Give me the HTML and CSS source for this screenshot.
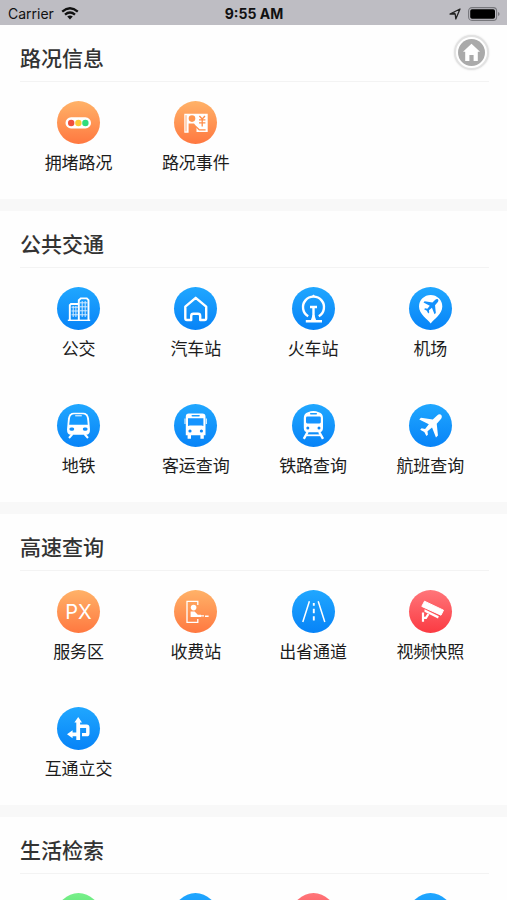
FILE: index.html
```html
<!DOCTYPE html>
<html lang="zh-CN">
<head>
<meta charset="utf-8">
<meta name="viewport" content="width=device-width, initial-scale=1">
<title>路况信息</title>
<link rel="stylesheet" href="styles.css">
</head>
<body>
<header class="status">
  <div class="status-left">
    <span>Carrier</span>
    <svg width="18" height="13" viewBox="0 0 18 13" aria-hidden="true">
      <g fill="none" stroke="#111" stroke-width="2.3">
        <path d="M1.2 4.6Q9-2 16.8 4.6"/>
        <path d="M4 7.7Q9 3.4 14 7.7"/>
      </g>
      <path d="M9 12.4L6.2 9.6Q9 7.4 11.8 9.6Z" fill="#111"/>
    </svg>
  </div>
  <span class="time">9:55 AM</span>
  <div class="status-right">
    <svg width="12" height="12" viewBox="0 0 12 12" aria-hidden="true"><path d="M1 6L11 1L6.8 11L6.2 6Z" fill="none" stroke="#222" stroke-width="1.3" stroke-linejoin="round"/><path d="M1 6L6 4.5L6.2 6Z" fill="#222"/></svg>
    <svg width="32" height="14" viewBox="0 0 32 14" aria-hidden="true">
      <rect x=".6" y=".6" width="28" height="12.8" rx="3.4" fill="none" stroke="#77777c" stroke-width="1.1"/>
      <rect x="2.2" y="2.2" width="24.8" height="9.6" rx="1.8" fill="#000"/>
      <path d="M30 5Q31.6 5.6 31.6 7T30 9Z" fill="#77777c"/>
    </svg>
  </div>
</header>

<a class="home" href="#" aria-label="首页">
  <svg width="27" height="27" viewBox="0 0 27 27"><circle cx="13.5" cy="13.5" r="13.5" fill="#aaa"/><path d="M13.5 4.8L22 12.8H19.8V22H15.6V16H11.4V22H7.2V12.8H5Z" fill="#fff"/></svg>
</a>

<main>
  <section class="group">
    <h2>路况信息</h2>
    <nav class="grid">
      <a class="tile" href="#"><span class="disc orange"><svg viewBox="0 0 43 43">
        <rect x="8.5" y="16.3" width="25.5" height="11.2" rx="5.6" fill="#fff"/>
        <circle cx="14.2" cy="22" r="3.2" fill="#f0503c"/><circle cx="21.4" cy="22" r="3.2" fill="#fccb35"/><circle cx="28.4" cy="22" r="3.2" fill="#2fdc7c"/>
      </svg></span><span>拥堵路况</span></a>
      <a class="tile" href="#"><span class="disc orange"><svg viewBox="0 0 43 43">
        <path d="M10.3 12.7H33.7V31H22.5V25.5L20 22.6H14.6V31.7H10.3Z" fill="#fff"/>
        <path d="M12 14.2V30.4" fill="none" stroke="#ff9650" stroke-width=".8"/>
        <circle cx="18" cy="17.6" r="3.3" fill="#ff9650"/>
        <path d="M25.4 15L28.2 18L31 15M28.2 18V25.4M25 18.8H31.4M25 21.8H31.4M22 25.6L25.2 28.8H31.6" fill="none" stroke="#ff8e4a" stroke-width="1.3"/>
      </svg></span><span>路况事件</span></a>
    </nav>
  </section>

  <section class="group">
    <h2>公共交通</h2>
    <nav class="grid">
      <a class="tile" href="#"><span class="disc blue"><svg viewBox="0 0 43 43">
        <path d="M10.8 33.3H33.2" stroke="#fff" stroke-width="1.4"/>
        <path d="M12.8 33V18.2L14 17H21.5M21.8 33V13.2L23.8 11.4H29.8L31.5 13.2V33" fill="none" stroke="#fff" stroke-width="1.9"/>
        <path d="M14.5 20.2H21M14.5 24H21M14.5 27.8H21M16.2 19V30M18.9 19V30M23 15.8H30.5M23 19.8H30.5M23 23.8H30.5M23 27.8H30.5M25.2 14V30M28.2 14V30" stroke="#d4ebff" stroke-width="1"/>
      </svg></span><span>公交</span></a>
      <a class="tile" href="#"><span class="disc blue"><svg viewBox="0 0 43 43">
        <path d="M21.7 10.8L32.2 19.7V31.3Q32.2 33 30.5 33H26.2V29Q26.2 26.8 24 26.8H19.4Q17.2 26.8 17.2 29V33H13Q11.3 33 11.3 31.3V19.7Z" fill="none" stroke="#fff" stroke-width="2.4" stroke-linejoin="round"/>
      </svg></span><span>汽车站</span></a>
      <a class="tile" href="#"><span class="disc blue"><svg viewBox="0 0 43 43">
        <path d="M16.2 29.2A10.5 10.5 0 1 1 26.8 29.2" fill="none" stroke="#fff" stroke-width="2.4"/>
        <path d="M19.2 9.8L21.5 7.4L23.8 9.8Z" fill="#fff"/>
        <path d="M18 20H25M21.5 20V34M13.8 34.2H30" stroke="#fff" stroke-width="2.4"/>
        <path d="M18.6 34L20.6 28H22.4L24.4 34Z" fill="#fff"/>
      </svg></span><span>火车站</span></a>
      <a class="tile" href="#"><span class="disc blue"><svg viewBox="0 0 43 43">
        <path d="M21.7 36.5C18.5 32.5 10 27 10 19.6A11.6 11.6 0 0 1 33.3 19.6C33.3 27 25 32.5 21.7 36.5Z" fill="#fff"/>
        <g class="cut" transform="translate(14 11.5) scale(.62)"><path d="M24.2 1.6C23.2.4 21.4.6 19.8 2L15.2 6.5L2.6 4.5L.8 6.5L11 11.5L7 16.4L3.3 15.8L1.8 17.4L6.2 19.8L8.4 24L10 22.6L9.6 19L14.4 14.8L18.6 25.4L20.7 23.5L19.4 10.9L23.6 6.2C25 4.6 25.2 2.8 24.2 1.6Z"/></g>
      </svg></span><span>机场</span></a>

      <a class="tile" href="#"><span class="disc blue"><svg viewBox="0 0 43 43">
        <path d="M16.8 8.8H26.2Q31 8.8 32 14.5L33 25.5Q33 30.8 29 30.8H14Q10 30.8 10 25.5L11 14.5Q12 8.8 16.8 8.8Z" fill="#fff"/>
        <path d="M17.2 10.3H25.8Q29.2 10.3 30 14L30.8 20.8H12.2L13 14Q13.8 10.3 17.2 10.3Z" fill="#159aff"/>
        <path d="M18.2 11.8H24.8" stroke="#fff" stroke-width="1"/>
        <rect x="12.4" y="23.5" width="4.8" height="3.2" rx="1.6" fill="#1090ff"/><rect x="25.8" y="23.5" width="4.8" height="3.2" rx="1.6" fill="#1090ff"/>
        <path d="M15.5 30L12 34M27.5 30L31 34" stroke="#fff" stroke-width="2"/>
      </svg></span><span>地铁</span></a>
      <a class="tile" href="#"><span class="disc blue"><svg viewBox="0 0 43 43">
        <path d="M14.8 9.5H28.4Q31.5 9.5 31.5 12.5V31.2H29.8V34.8H26.4V31.2H17V34.8H13.6V31.2H11.8V12.5Q11.8 9.5 14.8 9.5Z" fill="#fff"/>
        <rect x="17.5" y="11" width="8.3" height="1.6" rx=".8" fill="#1b9dff"/>
        <path d="M14 14.3H29.4V22L27.6 21.4H15.8L14 22Z" fill="#1594ff"/>
        <circle cx="16" cy="27" r="1.6" fill="#0c88fa"/><circle cx="27.4" cy="27" r="1.6" fill="#0c88fa"/>
        <path d="M11 14.5V20M32.3 14.5V20" stroke="#fff" stroke-width="1"/>
      </svg></span><span>客运查询</span></a>
      <a class="tile" href="#"><span class="disc blue"><svg viewBox="0 0 43 43">
        <path d="M16 8.2Q21.4 5.6 26.8 8.2Q31 9.5 31 14V24Q31 28.2 27 28.2H15.8Q11.8 28.2 11.8 24V14Q11.8 9.5 16 8.2Z" fill="#fff"/>
        <rect x="18" y="8.9" width="7" height="1.5" rx=".7" fill="#179aff"/>
        <rect x="14" y="12.6" width="14.8" height="6.8" rx="1.3" fill="#1594ff"/>
        <circle cx="15.8" cy="24" r="1.5" fill="#0c88fa"/><circle cx="27" cy="24" r="1.5" fill="#0c88fa"/>
        <path d="M15.6 28L11.8 34.8M27.2 28L31 34.8" stroke="#fff" stroke-width="2.4"/><path d="M14.5 31.3H28.3" stroke="#fff" stroke-width="1.8"/>
      </svg></span><span>铁路查询</span></a>
      <a class="tile" href="#"><span class="disc blue"><svg viewBox="0 0 43 43">
        <g transform="translate(9.5 9.5) scale(.94)"><path fill="#fff" d="M24.2 1.6C23.2.4 21.4.6 19.8 2L15.2 6.5L2.6 4.5L.8 6.5L11 11.5L7 16.4L3.3 15.8L1.8 17.4L6.2 19.8L8.4 24L10 22.6L9.6 19L14.4 14.8L18.6 25.4L20.7 23.5L19.4 10.9L23.6 6.2C25 4.6 25.2 2.8 24.2 1.6Z"/></g>
      </svg></span><span>航班查询</span></a>
    </nav>
  </section>

  <section class="group">
    <h2>高速查询</h2>
    <nav class="grid">
      <a class="tile" href="#"><span class="disc orange"><svg viewBox="0 0 43 43">
        <text class="px" x="21.5" y="28.5" text-anchor="middle">PX</text>
      </svg></span><span>服务区</span></a>
      <a class="tile" href="#"><span class="disc orange"><svg viewBox="0 0 43 43">
        <path d="M23.8 15V11.3H13V32.3H23.8V29" fill="none" stroke="#fff" stroke-width="1.3"/>
        <circle cx="19.6" cy="17.6" r="2.8" fill="#fff"/>
        <path d="M16.6 21.6H20.6L23.8 24.8H27V27H16.6Z" fill="#fff"/>
        <path d="M26 25.9H30M31 26.2H34.6" stroke="#fff" stroke-width="1.4"/>
      </svg></span><span>收费站</span></a>
      <a class="tile" href="#"><span class="disc blue"><svg viewBox="0 0 43 43">
        <path d="M17.4 11.2L10.8 32M26.2 11.2L32.8 32" stroke="#fff" stroke-width="1.5"/>
        <path d="M21.8 13V15.8M21.8 18.8V23.2M21.8 26.2V30.4" stroke="#fff" stroke-width="1.9"/>
      </svg></span><span>出省通道</span></a>
      <a class="tile" href="#"><span class="disc red"><svg viewBox="0 0 43 43">
        <path d="M15.5 11.2L34.5 20.2L32 25.2L12.8 16.4Z" fill="#fff" stroke="#fff" stroke-width="1" stroke-linejoin="round"/>
        <path d="M15.5 19.3L29.8 26.2L29 28.4L15.5 21.7Z" fill="#fff"/>
        <path d="M14 22.6V31.8M14 27.8H17L19.4 24" fill="none" stroke="#fff" stroke-width="2.2"/>
      </svg></span><span>视频快照</span></a>
      <a class="tile" href="#"><span class="disc blue"><svg viewBox="0 0 43 43">
        <path d="M21.2 33V14.5M15 27.3H21.2" stroke="#fff" stroke-width="3.8" fill="none"/>
        <path d="M17.4 15.6L21.2 10L25 15.6ZM15.6 23.3L10 27.3L15.6 31.3Z" fill="#fff"/>
        <path d="M22 19.2H29.6Q30.8 19.2 30.8 20.4V26.4Q30.8 27.6 29.6 27.6H25" fill="none" stroke="#fff" stroke-width="3.4"/>
      </svg></span><span>互通立交</span></a>
    </nav>
  </section>

  <section class="group">
    <h2>生活检索</h2>
    <nav class="grid">
      <a class="tile" href="#"><span class="disc green"></span></a>
      <a class="tile" href="#"><span class="disc blue"></span></a>
      <a class="tile" href="#"><span class="disc red"></span></a>
      <a class="tile" href="#"><span class="disc blue"></span></a>
    </nav>
  </section>
</main>
</body>
</html>
```
FILE: styles.css
```css
* {
  box-sizing: border-box;
}

html {
  scrollbar-width: none;
}

body {
  margin: 0;
  background: #f8f8f8;
  color: #1c1c1c;
  font-family: "Noto Sans CJK SC", sans-serif;
}

.status {
  display: grid;
  grid-template-columns: 1fr auto 1fr;
  align-items: center;
  height: 25px;
  padding: 2px 7px 0 8px;
  background: #bebdc3;
  color: #111;
  font: 14px/22px Inter, sans-serif;
}

.status-left,
.status-right {
  display: flex;
  align-items: center;
  gap: 7px;
}

.status-right {
  justify-content: flex-end;
}

.time {
  font-weight: 700;
}

.home {
  position: absolute;
  top: 35px;
  right: 18px;
  display: flex;
  align-items: center;
  justify-content: center;
  width: 35px;
  height: 35px;
  border: 2px solid #e2e2e2;
  border-radius: 50%;
  background: #fff;
  box-shadow: 0 0 2px #ddd;
}

main {
  display: flex;
  flex-direction: column;
  gap: 12px;
}

.group {
  padding: 0 18px 0 20px;
  background: #fefefe;
}

h2 {
  margin: 0;
  height: 57px;
  padding-top: 10px;
  border-bottom: 1px solid #f3f3f3;
  color: #333;
  font-size: 21px;
  font-weight: 500;
  line-height: 44px;
}

.grid {
  display: grid;
  grid-template-columns: repeat(4, 1fr);
}

.tile {
  display: flex;
  flex-direction: column;
  align-items: center;
  gap: 6px;
  height: 117px;
  padding-top: 19px;
  color: inherit;
  font-size: 17px;
  line-height: 24px;
  text-decoration: none;
}

.disc {
  width: 43px;
  height: 43px;
  border-radius: 50%;
}

.disc svg {
  display: block;
}

.orange {
  background: linear-gradient(#ffb268, #ff7840);
}

.blue {
  background: linear-gradient(#20a7ff, #0783f7);
}

.red {
  background: linear-gradient(#ff767a, #fb3a42);
}

.green {
  background: linear-gradient(#78f08a, #3fd460);
}

.cut {
  fill: #1390fc;
}

.px {
  fill: #fff;
  font: 20px Inter, sans-serif;
}
```
